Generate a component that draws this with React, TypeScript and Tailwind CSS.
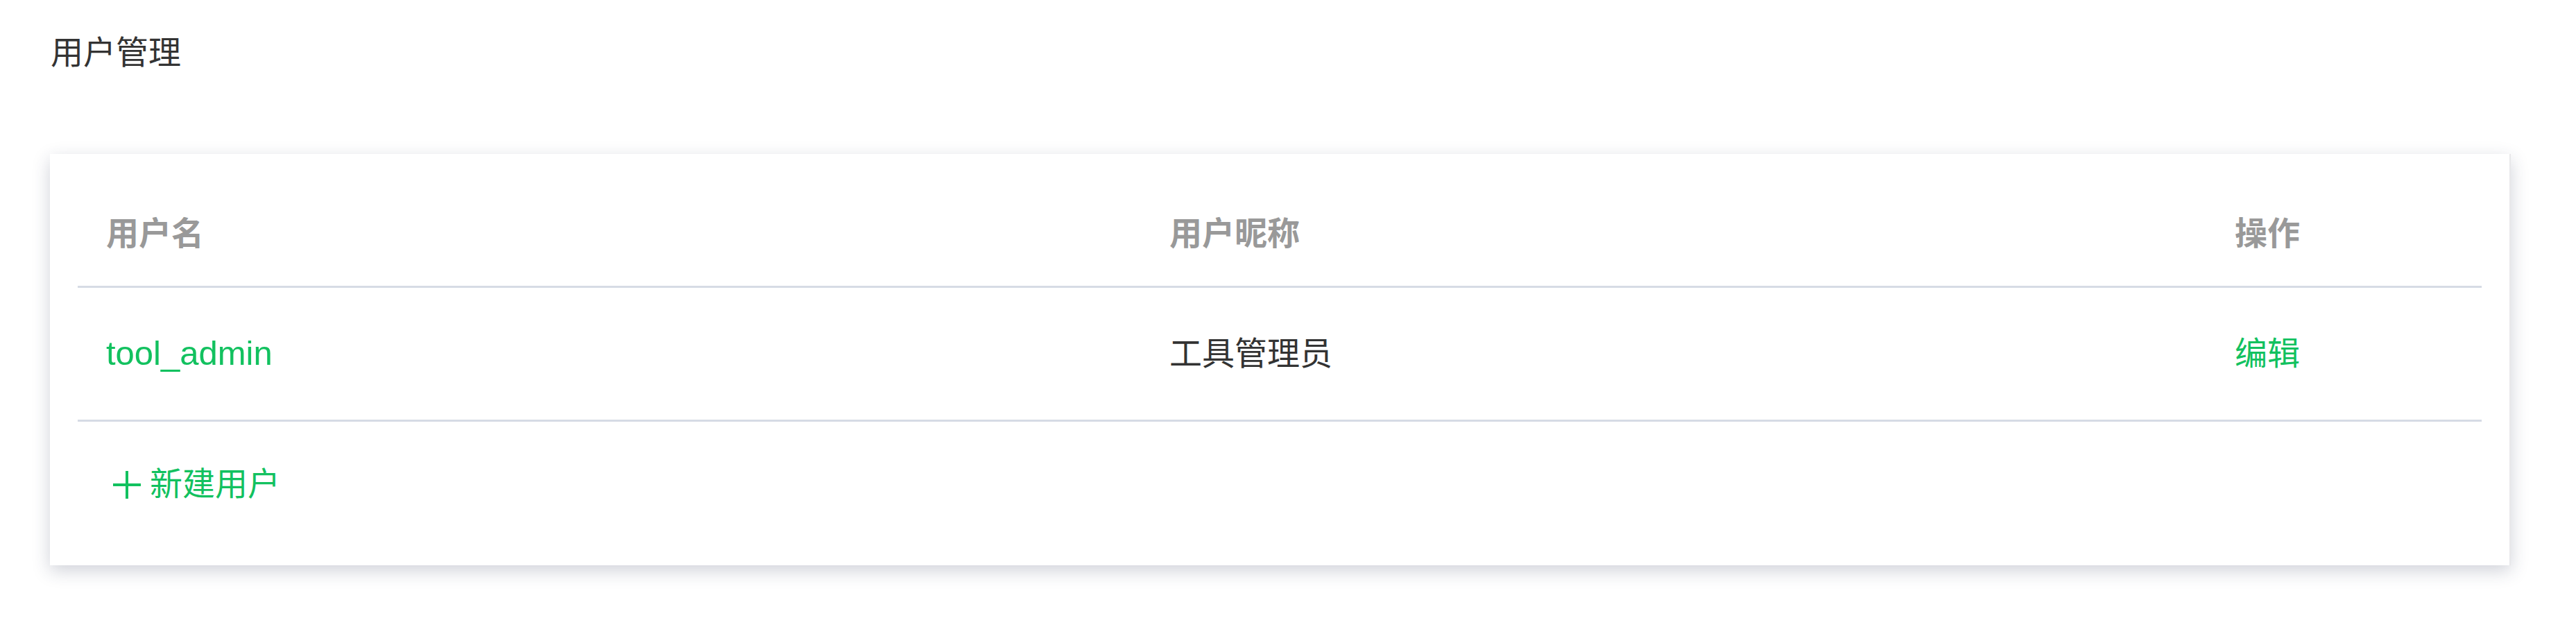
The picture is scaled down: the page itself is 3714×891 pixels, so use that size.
import React from "react";

const font = { fontFamily: '"Liberation Sans", "Noto Sans CJK SC", sans-serif' };

export default function App() {
  return (
    <div className="min-h-[891px] w-[3714px] bg-white" style={font}>
      <div className="pl-[73px] pt-[52px] text-[47px] leading-[47px] text-[#333333]">用户管理</div>
      <div className="ml-[72px] mt-[123px] w-[3548px] bg-white px-[40px] shadow-[0_8px_24px_rgba(40,50,80,0.22)] border-r-2 border-[#e8e8ea]">
        <div className="grid h-[193px] grid-cols-[1533px_1536px_1fr] items-center border-b-[3px] border-[#d6dbe5] pt-[40px] text-[47px] font-semibold text-[#999999]">
          <div className="pl-[41px]">用户名</div>
          <div className="pl-[41px]">用户昵称</div>
          <div className="pl-[41px]">操作</div>
        </div>
        <div className="grid h-[193px] grid-cols-[1533px_1536px_1fr] items-center border-b-[3px] border-[#d6dbe5] text-[47px]">
          <div className="pl-[41px] text-[49px] text-[#12c15f]">tool_admin</div>
          <div className="pl-[41px] text-[#333333]">工具管理员</div>
          <div className="pl-[41px] text-[#12c15f]">编辑</div>
        </div>
        <div className="flex h-[207px] items-center pb-[26px] pl-[49px] text-[47px] text-[#12c15f]">
          <svg width="44" height="44" viewBox="0 0 44 44" className="mr-[11px]">
            <path d="M22 2 V42 M2 22 H42" stroke="#12c15f" strokeWidth="4" fill="none" />
          </svg>
          <span>新建用户</span>
        </div>
      </div>
    </div>
  );
}
